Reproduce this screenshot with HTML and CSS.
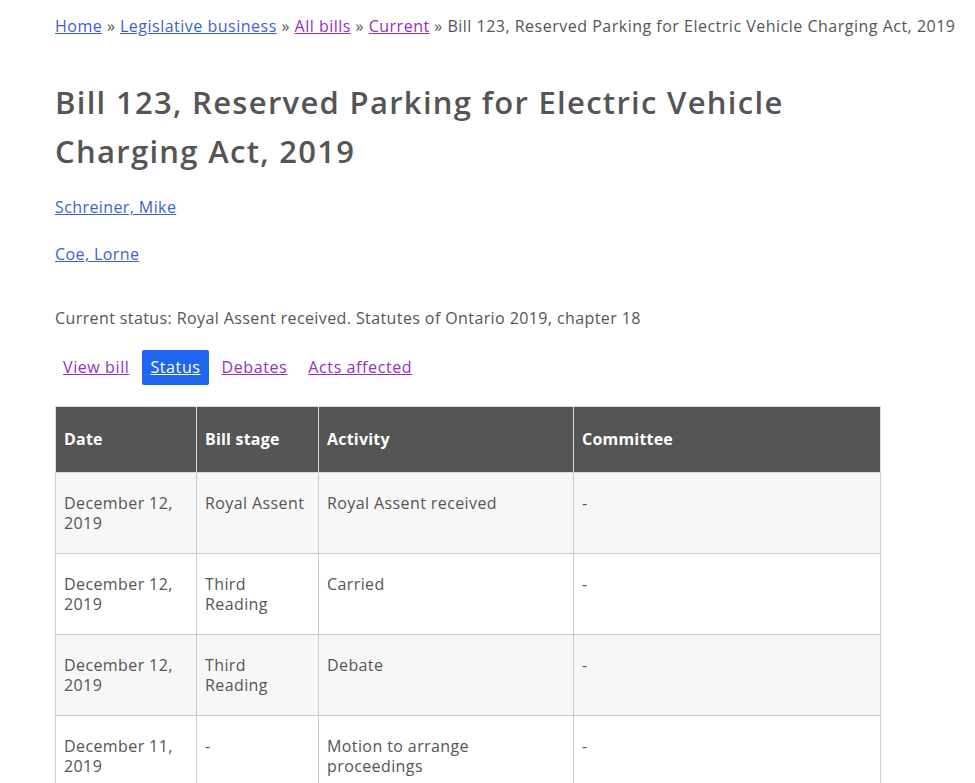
FILE: index.html
```html
<!DOCTYPE html>
<html lang="en">
<head>
<meta charset="utf-8">
<title>Bill 123, Reserved Parking for Electric Vehicle Charging Act, 2019</title>
<link rel="stylesheet" href="styles.css">
</head>
<body>
<main class="page">
  <nav class="breadcrumb">
    <a class="link" href="#">Home</a> » <a class="link" href="#">Legislative business</a> » <a class="link visited" href="#">All bills</a> » <a class="link visited" href="#">Current</a> » Bill 123, Reserved Parking for Electric Vehicle Charging Act, 2019
  </nav>

  <h1 class="title">Bill 123, Reserved Parking for Electric Vehicle Charging Act, 2019</h1>

  <p class="author"><a class="link" href="#">Schreiner, Mike</a></p>
  <p class="author"><a class="link" href="#">Coe, Lorne</a></p>

  <p class="status">Current status: Royal Assent received. Statutes of Ontario 2019, chapter 18</p>

  <ul class="tabs">
    <li class="tab"><a class="link visited" href="#">View bill</a></li>
    <li class="tab active"><a href="#">Status</a></li>
    <li class="tab"><a class="link visited" href="#">Debates</a></li>
    <li class="tab"><a class="link visited" href="#">Acts affected</a></li>
  </ul>

  <table class="stages">
    <colgroup>
      <col class="c-date">
      <col class="c-stage">
      <col class="c-activity">
      <col class="c-committee">
    </colgroup>
    <thead>
      <tr><th>Date</th><th>Bill stage</th><th>Activity</th><th>Committee</th></tr>
    </thead>
    <tbody>
      <tr><td>December 12, 2019</td><td>Royal Assent</td><td>Royal Assent received</td><td>-</td></tr>
      <tr><td>December 12, 2019</td><td>Third Reading</td><td>Carried</td><td>-</td></tr>
      <tr><td>December 12, 2019</td><td>Third Reading</td><td>Debate</td><td>-</td></tr>
      <tr><td>December 11, 2019</td><td>-</td><td>Motion to arrange proceedings</td><td>-</td></tr>
    </tbody>
  </table>
</main>
</body>
</html>
```

FILE: styles.css
```css
html, body {
  margin: 0;
  padding: 0;
  background: #ffffff;
}

body {
  font-family: "Open Sans", "Noto Sans", "Liberation Sans", sans-serif;
  font-size: 16px;
  color: #555555;
  letter-spacing: 0.4px;
}

.page {
  padding: 14px 0 0 55px;
}

.link {
  color: #3d5fcf;
  text-decoration: underline;
}

.link.visited {
  color: #9131c4;
}

.breadcrumb {
  line-height: 24px;
  white-space: nowrap;
  letter-spacing: 0.5px;
}

.title {
  margin: 40px 0 0;
  width: 800px;
  font-size: 31px;
  line-height: 49px;
  font-weight: 600;
  letter-spacing: 1.3px;
  color: #555555;
}

.author {
  margin: 0;
  line-height: 24px;
}

.author:first-of-type {
  margin-top: 19px;
}

.author + .author {
  margin-top: 23px;
}

.status {
  margin: 40px 0 0;
  line-height: 24px;
}

.tabs {
  display: flex;
  gap: 5px;
  list-style: none;
  margin: 20px 0 0;
  padding: 0;
  letter-spacing: 0.6px;
}

.tab {
  height: 35px;
  line-height: 35px;
  padding: 0 8px;
  border-radius: 2px;
}

.tab.active {
  background: #2166ef;
}

.tab.active a {
  color: #ffffff;
  text-decoration: underline;
}

.stages {
  margin-top: 21px;
  border-collapse: collapse;
  table-layout: fixed;
  width: 825px;
}

.c-date { width: 141px; }
.c-stage { width: 122px; }
.c-activity { width: 255px; }
.c-committee { width: 307px; }

.stages th,
.stages td {
  border: 1px solid #cbcbcb;
  padding: 20px 8px;
  text-align: left;
  vertical-align: top;
  line-height: 20px;
}

.stages th {
  background: #555555;
  color: #ffffff;
  font-weight: 700;
  padding: 22px 8px 23px;
  border-color: #dcdcdc;
  letter-spacing: 0.2px;
}

.stages td {
  height: 40px;
}

.stages tbody tr:nth-child(odd) td {
  background: #f7f7f7;
}
```
